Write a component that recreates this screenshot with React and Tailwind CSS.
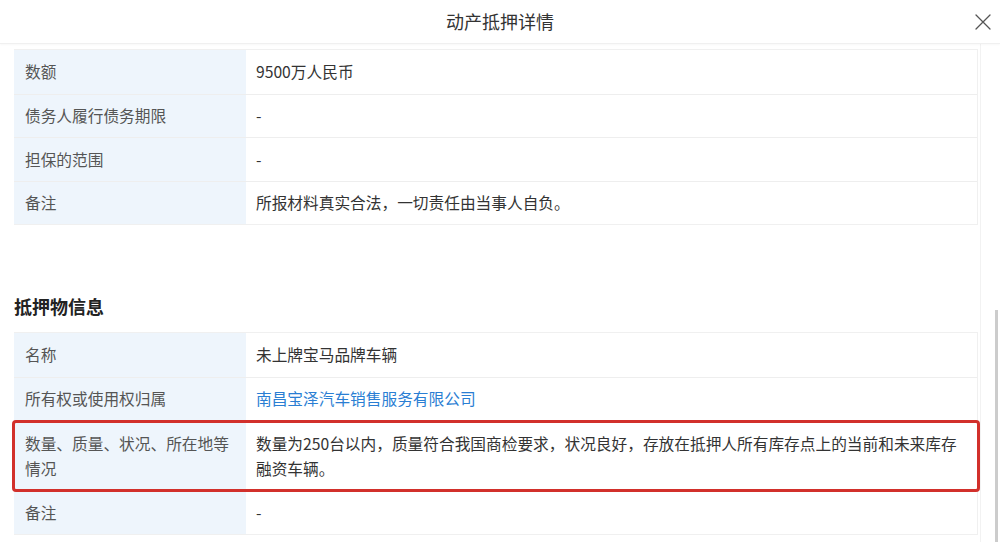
const base = [
    ['数额', '9500万人民币'],
    ['债务人履行债务期限', '-'],
    ['担保的范围', '-'],
    ['备注', '所报材料真实合法，一切责任由当事人自负。'],
];

function Row({ label, children, tall, highlight }) {
    return (
        <div className={`relative flex border-t border-[#eeeeee] first:border-t-0 ${tall ? 'h-[70px]' : 'h-[43.5px]'}`}>
            <div className="w-[232px] shrink-0 bg-[#eef5fc] pl-[11px] pr-[8px] flex items-center text-[#555] leading-[25px]">
                {label}
            </div>
            <div className="flex-1 pl-[10px] pr-[12px] flex items-center text-[#333] leading-[25px]">
                {children}
            </div>
            {highlight && (
                <div className="absolute z-10 -left-[2px] -right-[3px] -top-[1px] -bottom-[2px] border-[3px] border-[#d2302b] rounded-[4px] pointer-events-none"></div>
            )}
        </div>
    );
}

export default function App() {
    return (
        <div
            className="w-[1000px] h-[542px] bg-white overflow-hidden flex flex-col text-[15.7px]"
            style={{ fontFamily: '"Noto Sans CJK SC", "Noto Sans", sans-serif' }}
        >
            {/* Header */}
            <div className="h-[44px] shrink-0 relative flex items-center justify-center border-b border-[#f0f0f0] shadow-[0_1px_2px_rgba(0,0,0,0.03)]">
                <span className="text-[18px] text-[#333]">动产抵押详情</span>
                <button className="absolute left-[975px] top-[14px] text-[#555]">
                    <svg width="16" height="16" viewBox="0 0 16 16" fill="none" stroke="currentColor" strokeWidth="1.3" strokeLinecap="round">
                        <path d="M1 1 L15 15 M15 1 L1 15" />
                    </svg>
                </button>
            </div>

            {/* Body */}
            <div className="flex-1 flex overflow-hidden">
                <div className="w-[980px] pl-[14px] pr-[2px] pt-[5px]">
                    <div className="border border-[#f0f0f0] border-l-0">
                        {base.map(([l, v]) => (
                            <Row key={l} label={l}>{v}</Row>
                        ))}
                    </div>

                    <h2 className="mt-[68px] mb-[13px] text-[18px] font-bold text-[#222] leading-[26px]">抵押物信息</h2>

                    <div className="border border-[#f0f0f0] border-l-0">
                        <Row label="名称">未上牌宝马品牌车辆</Row>
                        <Row label="所有权或使用权归属">
                            <span className="text-[#2a7ed3]">南昌宝泽汽车销售服务有限公司</span>
                        </Row>
                        <Row label="数量、质量、状况、所在地等情况" tall highlight>
                            数量为250台以内，质量符合我国商检要求，状况良好，存放在抵押人所有库存点上的当前和未来库存融资车辆。
                        </Row>
                        <Row label="备注">-</Row>
                    </div>
                </div>

                {/* Scrollbar */}
                <div className="w-[20px] border-l border-[#f2f2f2] flex justify-end">
                    <div className="w-[3px] mt-[266px] h-full bg-[#cccccc] mr-[2px]"></div>
                </div>
            </div>
        </div>
    );
}
